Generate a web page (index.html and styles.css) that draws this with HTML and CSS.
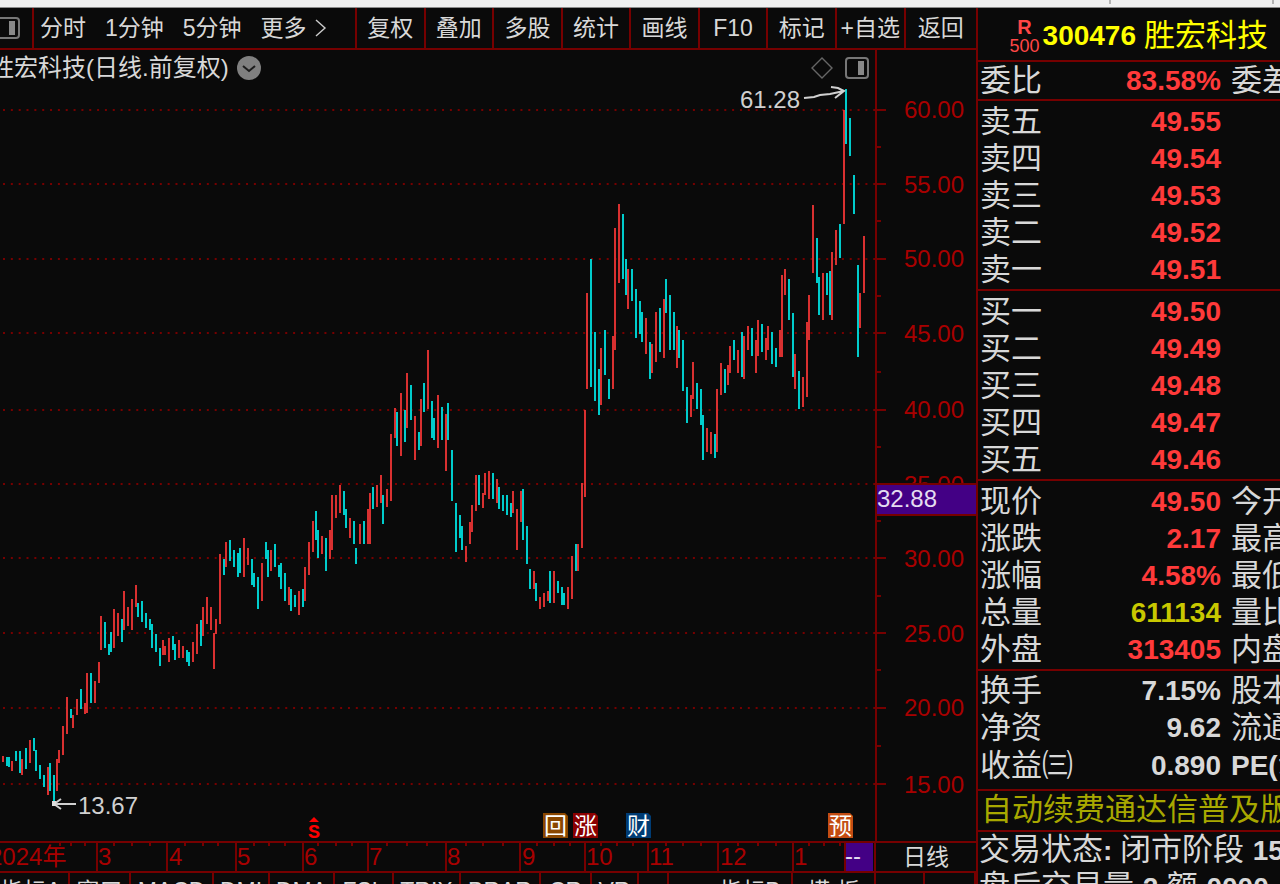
FILE: index.html
```html
<!DOCTYPE html>
<html lang="zh-CN">
<head>
<meta charset="utf-8">
<title>胜宏科技 300476</title>
<link rel="stylesheet" href="styles.css">
</head>
<body>
<div class="strip"><span class="strip-mark"></span><span class="strip-mark strip-mark-end"></span></div>
<div class="terminal">
  <main class="left">
    <nav class="toolbar">
      <button class="tool tool-panel" aria-label="侧栏">
        <svg class="panel-icon" viewBox="0 0 24 22"><rect x="1" y="1" width="22" height="20" rx="3" fill="none" stroke="#777" stroke-width="2"/><rect x="13" y="4" width="6" height="14" fill="#888"/></svg>
      </button>
      <div class="periods">
        <button class="tool">分时</button>
        <button class="tool">1分钟</button>
        <button class="tool">5分钟</button>
        <button class="tool tool-more">更多<svg class="more-icon" viewBox="0 0 12 18"><path d="M1 1L10 9L1 17" fill="none" stroke="#ccc" stroke-width="1.4"/></svg></button>
      </div>
      <button class="tool tool-cell">复权</button>
      <button class="tool tool-cell">叠加</button>
      <button class="tool tool-cell">多股</button>
      <button class="tool tool-cell">统计</button>
      <button class="tool tool-cell">画线</button>
      <button class="tool tool-cell">F10</button>
      <button class="tool tool-cell">标记</button>
      <button class="tool tool-cell">+自选</button>
      <button class="tool tool-cell tool-last">返回</button>
    </nav>

    <section class="chart">
      <header class="chart-title">
        <h1 class="chart-name">胜宏科技(日线.前复权)</h1>
        <button class="icon-button" aria-label="展开"><svg class="round-icon" viewBox="0 0 24 24"><circle cx="12" cy="12" r="12" fill="#808080"/><path d="M6 10L12 15L18 10" fill="none" stroke="#1c1c1c" stroke-width="2"/></svg></button>
        <button class="icon-button push" aria-label="标记点"><svg class="diamond-icon" viewBox="0 0 22 22"><path d="M11 1L21 11L11 21L1 11Z" fill="none" stroke="#666" stroke-width="1.4"/></svg></button>
        <button class="icon-button icon-side" aria-label="侧栏"><svg class="panel-icon" viewBox="0 0 24 22"><rect x="1" y="1" width="22" height="20" rx="3" fill="none" stroke="#777" stroke-width="2"/><rect x="13" y="4" width="6" height="14" fill="#888"/></svg></button>
      </header>
      <svg class="plot" viewBox="0 50 976 791">
        <path class="grid" d="M3 110H875M3 184H875M3 259H875M3 333H875M3 410H875M3 484H875M3 558H875M3 633H875M3 708H875M3 784H875"/>
        <path class="axis" d="M876 50V841M876 110h10M876 184h10M876 259h10M876 333h10M876 410h10M876 558h10M876 633h10M876 708h10M876 784h10M876 147h5M876 221h5M876 296h5M876 372h5M876 447h5M876 521h5M876 596h5M876 670h5M876 746h5"/>
        <path class="up" d="M3 756V762M12 761V771M22 759V775M30 740V763M48 767V795M57 759V791M59 750V763M63 726V755M67 697V734M73 715V728M77 699V715M85 703V714M87 673V713M95 681V703M99 662V683M101 616V650M114 609V648M118 613V636M124 591V630M128 607V626M132 599V630M136 585V607M163 640V655M165 646V655M169 638V662M179 640V658M183 646V658M193 642V662M197 624V654M203 607V636M207 597V624M211 607V630M214 633V669M216 619V634M220 554V624M226 542V567M244 538V577M248 548V565M262 563V601M271 550V571M289 587V605M299 591V615M305 567V601M309 542V575M313 521V552M322 536V554M330 530V559M332 495V550M336 495V518M340 485V513M350 518V538M360 524V544M368 509V544M370 493V544M377 485V507M381 475V503M387 489V507M391 434V501M395 408V438M401 393V456M407 373V428M415 416V460M421 399V446M428 350V409M438 395V448M446 414V471M466 546V562M470 522V544M472 505V532M476 475V511M483 493V508M485 473V495M489 471V499M497 479V503M513 491V513M517 509V550M521 491V522M534 571V589M540 597V609M544 593V607M548 591V601M554 571V603M568 587V609M572 556V599M578 544V571M582 483V548M585 410V497M587 293V389M601 348V405M613 336V389M615 228V350M619 204V283M628 269V309M646 318V354M652 344V373M656 312V362M664 299V358M677 326V368M691 395V417M693 362V399M707 428V452M711 432V454M717 389V452M721 363V395M728 365V385M730 346V373M738 350V373M744 336V379M748 326V350M756 340V373M758 320V356M766 338V360M768 326V350M780 330V357M782 275V357M785 269V295M795 354V389M803 377V407M807 322V397M809 295V340M813 205V273M823 273V320M832 252V320M836 230V265M844 110V224M860 293V328M864 236V293"/>
        <path class="down" d="M7 757V766M9 757V767M16 751V761M20 751V773M26 748V769M34 738V751M36 750V771M40 765V779M44 775V787M50 763V791M54 775V803M71 709V718M81 689V709M91 673V703M105 622V648M109 644V655M111 632V652M122 619V642M138 603V617M142 601V622M146 613V628M150 619V630M152 624V648M156 634V652M160 648V666M173 636V650M175 644V660M187 650V662M189 652V666M201 620V646M224 559V575M230 540V561M234 550V567M238 553V577M240 548V573M252 559V585M254 573V587M258 577V609M266 542V559M268 550V577M275 544V567M279 565V577M281 563V589M285 573V601M291 589V611M295 595V607M303 589V607M316 511V540M318 530V558M326 538V571M344 491V515M346 509V528M354 521V544M356 548V564M364 521V544M373 487V509M383 495V524M397 412V446M405 410V442M411 385V420M419 432V450M424 383V412M432 401V438M434 418V440M442 407V440M448 403V440M452 450V501M456 503V552M460 515V538M462 526V550M479 475V505M493 473V499M499 487V509M503 495V511M507 495V515M511 503V517M523 489V540M527 526V564M530 569V589M536 583V601M550 571V603M558 581V593M562 587V605M564 593V605M576 544V571M591 259V387M595 332V401M599 369V415M605 330V375M609 379V399M623 214V279M626 259V295M632 269V301M636 289V338M640 301V334M642 312V342M650 342V379M660 308V352M666 279V313M670 295V350M674 312V350M679 330V358M683 340V391M687 387V423M697 383V409M701 389V425M703 415V460M715 434V458M725 369V393M734 340V360M742 332V377M752 328V356M762 324V352M772 332V364M776 348V367M789 279V320M793 313V377M799 371V409M817 238V283M819 277V315M827 273V295M830 271V315M840 224V258M846 89V144M850 118V156M854 175V214M858 265V357"/>
        <path class="arrow" d="M804 98L814 97L820 95L830 94L844 91M831 87L838 88L844 91L835 98M76 804H54M61 799L54 804L61 809"/>
        <rect x="52" y="801" width="4" height="5" fill="#ddd"/>
        <text class="note" x="740" y="108">61.28</text>
        <text class="note" x="78" y="814">13.67</text>
        <g class="price">
          <text x="904" y="118">60.00</text><text x="904" y="193">55.00</text><text x="904" y="267">50.00</text>
          <text x="904" y="342">45.00</text><text x="904" y="418">40.00</text><text x="904" y="493">35.00</text>
          <text x="904" y="567">30.00</text><text x="904" y="642">25.00</text><text x="904" y="716">20.00</text>
          <text x="904" y="793">15.00</text>
        </g>
        <rect x="877" y="484" width="99" height="31" fill="#430085"/>
        <path class="axis" d="M877 484H976M877 515H976"/>
        <text class="cursor-price" x="877" y="507">32.88</text>
        <path d="M309 822L314 817L319 822Z" fill="#f00"/>
        <text class="signal" x="308" y="838">S</text>
        <g class="event">
          <path d="M543 813H565L568 816V838H543Z" fill="#8a4700"/><text x="544" y="834">回</text>
          <path d="M573 813H595L598 816V838H573Z" fill="#8b0000"/><text x="574" y="834">涨</text>
          <path d="M626 813H648L651 816V838H626Z" fill="#003c74"/><text x="627" y="834">财</text>
          <path d="M828 813H850L853 816V838H828Z" fill="#c34c12"/><text x="829" y="834">预</text>
        </g>
      </svg>
    </section>

    <div class="time-row">
      <svg class="time-axis" viewBox="0 841 876 32">
        <rect x="845" y="842" width="28" height="30" fill="#430085"/>
        <path class="axis" d="M0 842H876M0 872H876M97 842V872M167 842V872M236 842V872M303 842V872M368 842V872M446 842V872M520 842V872M585 842V872M648 842V872M718 842V872M793 842V872M845 842V872M875 842V872M60 842v4M71 842v4M85 842v4M114 842v4M132 842v4M150 842v4M185 842v4M203 842v4M218 842v4M254 842v4M269 842v4M285 842v4M318 842v4M336 842v4M352 842v4M387 842v4M407 842v4M427 842v4M466 842v4M483 842v4M503 842v4M537 842v4M554 842v4M570 842v4M601 842v4M617 842v4M633 842v4M666 842v4M683 842v4M701 842v4M738 842v4M758 842v4M776 842v4M809 842v4M824 842v4M840 842v4"/>
        <g class="month">
          <text x="-11" y="865">2024年</text><text x="98" y="865">3</text><text x="169" y="865">4</text><text x="237" y="865">5</text>
          <text x="304" y="865">6</text><text x="369" y="865">7</text><text x="447" y="865">8</text><text x="522" y="865">9</text>
          <text x="586" y="865">10</text><text x="649" y="865">11</text><text x="720" y="865">12</text><text x="794" y="865">1</text>
        </g>
        <text class="cursor-price" x="845" y="864">--</text>
      </svg>
      <button class="period-button">日线</button>
    </div>

    <nav class="tabs">
      <button class="tab tab-69">指标A</button>
      <button class="tab tab-61">窗口</button>
      <button class="tab tab-83">MACD</button>
      <button class="tab tab-56">DMI</button>
      <button class="tab tab-65">DMA</button>
      <button class="tab tab-59">FSL</button>
      <button class="tab tab-67">TRIX</button>
      <button class="tab tab-80">BRAR</button>
      <button class="tab tab-51">CR</button>
      <button class="tab tab-47">VR</button>
      <button class="tab tab-30">&gt;</button>
      <button class="tab tab-wide">指标B</button>
      <button class="tab tab-83">模 板</button>
      <button class="tab tab-49">+</button>
      <span class="tab tab-51"></span>
    </nav>
  </main>

  <aside class="quote">
    <header class="stock">
      <div class="flags"><b class="flag-r">R</b><span class="flag-500">500</span></div>
      <b class="code">300476</b>
      <span class="name">胜宏科技</span>
    </header>
    <table class="block block-ratio">
      <tr><th>委比</th><td class="red">83.58%</td><th>委差</th></tr>
    </table>
    <table class="block">
      <tr><th>卖五</th><td class="red">49.55</td><th></th></tr>
      <tr><th>卖四</th><td class="red">49.54</td><th></th></tr>
      <tr><th>卖三</th><td class="red">49.53</td><th></th></tr>
      <tr><th>卖二</th><td class="red">49.52</td><th></th></tr>
      <tr><th>卖一</th><td class="red">49.51</td><th></th></tr>
    </table>
    <table class="block">
      <tr><th>买一</th><td class="red">49.50</td><th></th></tr>
      <tr><th>买二</th><td class="red">49.49</td><th></th></tr>
      <tr><th>买三</th><td class="red">49.48</td><th></th></tr>
      <tr><th>买四</th><td class="red">49.47</td><th></th></tr>
      <tr><th>买五</th><td class="red">49.46</td><th></th></tr>
    </table>
    <table class="block">
      <tr><th>现价</th><td class="red">49.50</td><th>今开</th></tr>
      <tr><th>涨跌</th><td class="red">2.17</td><th>最高</th></tr>
      <tr><th>涨幅</th><td class="red">4.58%</td><th>最低</th></tr>
      <tr><th>总量</th><td class="yellow">611134</td><th>量比</th></tr>
      <tr><th>外盘</th><td class="red">313405</td><th>内盘</th></tr>
    </table>
    <table class="block block-last">
      <tr><th>换手</th><td>7.15%</td><th>股本</th></tr>
      <tr><th>净资</th><td>9.62</td><th>流通</th></tr>
      <tr><th>收益㈢</th><td>0.890</td><th><b class="latin">PE(</b>动</th></tr>
    </table>
    <p class="notice">自动续费通达信普及版</p>
    <div class="status">
      <p class="status-line">交易状态<b class="latin">: </b>闭市阶段 <b class="latin">15</b></p>
      <p class="status-line">盘后交易量 <b class="latin">2</b> 额 <b class="latin">0000</b></p>
    </div>
  </aside>
</div>
</body>
</html>
```
FILE: styles.css
```css
* { box-sizing: border-box; }
html, body { height: 100%; }
body {
  margin: 0;
  overflow: hidden;
  background: #0a0a0a;
  color: #d8d8d8;
  font-family: "Liberation Sans", "Noto Sans CJK SC", sans-serif;
  font-size: 23px;
}
button {
  margin: 0;
  padding: 0;
  border: 0;
  background: none;
  color: inherit;
  font: inherit;
  white-space: nowrap;
}
svg { display: block; }
p, h1 { margin: 0; font-weight: 400; }

.strip {
  display: flex;
  justify-content: flex-end;
  height: 8px;
  padding-right: 6px;
  background: #f0f0f0;
  border-bottom: 1px solid #8c8c8c;
}
.strip-mark { width: 2px; height: 4px; margin-left: 161px; background: #b4b4b4; }

.terminal { display: flex; }
.left { flex: 1; min-width: 0; overflow: hidden; }

.toolbar {
  display: flex;
  height: 42px;
  border-bottom: 2px solid #760000;
}
.tool { line-height: 40px; }
.tool-panel { width: 32px; }
.tool-panel .panel-icon { margin-left: -4px; }
.panel-icon { width: 24px; height: 22px; }
.periods {
  display: flex;
  flex: none;
  gap: 19px;
  width: 323px;
  padding-left: 6px;
  border-left: 2px solid #760000;
}
.tool-more { display: flex; align-items: center; gap: 8px; }
.more-icon { width: 12px; height: 18px; }
.tool-cell { flex: 17 1 0; min-width: 0; border-left: 2px solid #760000; }
.tool-last { flex-grow: 18; }

.chart { position: relative; }
.chart-title {
  position: absolute;
  top: 0;
  left: 0;
  display: flex;
  align-items: center;
  width: 89%;
  height: 36px;
  gap: 8px;
}
.chart-name { margin-left: -10px; font-size: 24px; line-height: 36px; }
.push { margin-left: auto; }
.icon-side { margin-left: 4px; }
.round-icon { width: 24px; height: 24px; }
.diamond-icon { width: 22px; height: 22px; }
.plot { width: 100%; height: auto; }

.grid { fill: none; stroke: #760000; stroke-width: 2; stroke-dasharray: 2 5.84; }
.axis { fill: none; stroke: #760000; stroke-width: 2; }
.up { fill: none; stroke: #d93030; stroke-width: 2; }
.down { fill: none; stroke: #00cccc; stroke-width: 2; }
.arrow { fill: none; stroke: #d0d0d0; stroke-width: 2; }
.note { fill: #d0d0d0; font-size: 24px; }
.price, .month { fill: #a80000; font-size: 24px; }
.cursor-price { fill: #e4dcf0; font-size: 24px; }
.signal { fill: #f00; font: bold 20px "Liberation Mono", monospace; }
.event { fill: #fff; font-size: 23px; }

.time-row { display: flex; }
.time-axis { flex: 876 1 0; min-width: 0; }
.period-button {
  flex: 100 1 0;
  min-width: 0;
  border-top: 2px solid #760000;
  border-bottom: 2px solid #760000;
  line-height: 27px;
}

.tabs { display: flex; height: 36px; }
.tab { flex: none; border-right: 2px solid #760000; line-height: 34px; text-align: center; }
.tab-30 { width: 30px; }
.tab-47 { width: 47px; }
.tab-49 { width: 49px; }
.tab-51 { width: 51px; }
.tab-56 { width: 56px; }
.tab-59 { width: 59px; }
.tab-61 { width: 61px; }
.tab-65 { width: 65px; }
.tab-67 { width: 67px; }
.tab-69 { width: 70px; padding-right: 16px; }
.tab-80 { width: 80px; }
.tab-83 { width: 83px; }
.tab-wide { flex: 1; padding-left: 40px; }

.quote {
  flex: none;
  width: 304px;
  overflow: hidden;
  border-left: 2px solid #760000;
  font-size: 31px;
}
.stock {
  display: flex;
  align-items: center;
  justify-content: flex-end;
  height: 54px;
  padding: 3px 12px 0 0;
  border-bottom: 2px solid #760000;
  color: #ff0;
}
.flags {
  display: flex;
  flex-direction: column;
  align-items: center;
  margin-right: 3px;
  color: #ff4646;
}
.flag-r { font-size: 20px; line-height: 20px; }
.flag-500 { font-size: 18px; line-height: 18px; }
.code { margin-right: 8px; font-size: 28px; }
.name { line-height: 50px; }

.block {
  width: 100%;
  height: 190px;
  padding: 2px 0 0;
  border-spacing: 0;
  border-bottom: 2px solid #760000;
  table-layout: fixed;
}
.block-ratio { height: 39px; padding: 0; }
.block-last { height: 120px; padding-bottom: 4px; }
.block th, .block td { padding: 0; line-height: 36px; white-space: nowrap; }
.block th { width: 49px; font-weight: 400; text-align: left; }
.block th:first-child { width: 110px; padding-left: 2px; }
.block td { padding-right: 10px; font-size: 28px; font-weight: 700; text-align: right; }
.red { color: #ff3a3a; }
.yellow { color: #c8c800; }
.latin { font-size: 28px; }
.notice {
  height: 41px;
  padding-left: 3px;
  border-bottom: 2px solid #760000;
  color: #a8a800;
  line-height: 38px;
  white-space: nowrap;
}
.status { padding-left: 1px; }
.status-line { line-height: 36px; white-space: nowrap; }
```
